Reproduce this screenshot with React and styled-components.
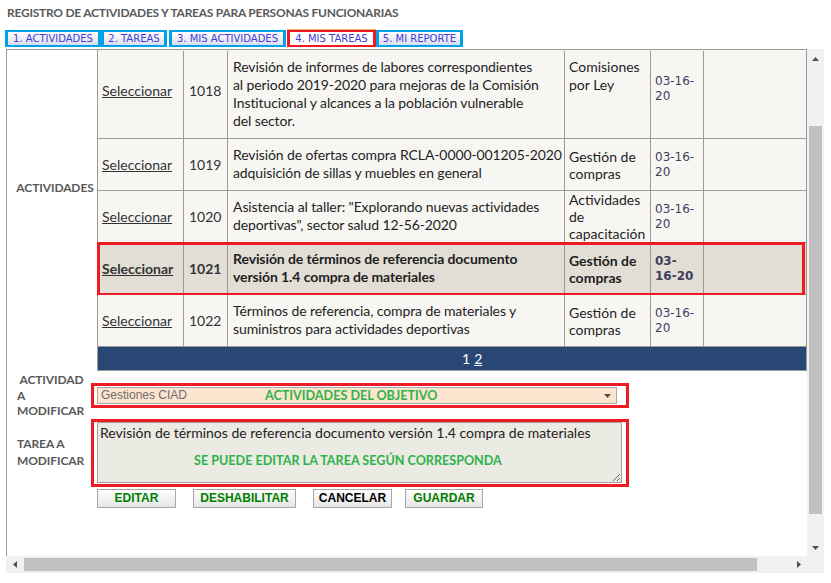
import React from 'react';
import styled, { createGlobalStyle, css } from 'styled-components';

const GlobalStyle = createGlobalStyle`
  html, body { margin: 0; padding: 0; background: #fff; }
  body { font-family: Lato, "Liberation Sans", sans-serif; }
  * { box-sizing: border-box; }
`;

const Page = styled.div`
  width: 831px;
  height: 583px;
  overflow: hidden;
  padding-top: 5px;
`;

const Title = styled.h1`
  margin: 0 0 0 7px;
  font: 700 12px/15px Lato, "Liberation Sans", sans-serif;
  letter-spacing: -0.25px;
  color: #595959;
`;

const Tabs = styled.nav`
  display: flex;
  margin: 10px 0 0 5px;
  height: 17px;
`;

const Tab = styled.a`
  display: flex;
  align-items: center;
  justify-content: center;
  width: ${p => p.$w}px;
  margin-left: ${p => p.$ml || 0}px;
  border: 3px solid ${p => (p.$active ? '#ed1c24' : '#00a2e8')};
  border-top-width: 2px;
  border-bottom-width: 2px;
  background: ${p => (p.$active ? '#ffffff' : 'linear-gradient(#ffffff, #dcdcee)')};
  box-shadow: ${p => (p.$active ? '0 -1px 0 #f0b070' : 'none')};
  font: 10px/13px "DejaVu Sans", Verdana, sans-serif;
  color: #3c3cd8;
  white-space: nowrap;
  text-decoration: none;
`;

const Panel = styled.section`
  display: grid;
  grid-template-columns: 801px 17px;
  grid-template-rows: 507px 17px;
  margin: 2px 0 0 6px;
  width: 818px;
`;

const Viewport = styled.div`
  border-top: 1px solid #9a9a9a;
  border-left: 1px solid #9a9a9a;
  overflow: hidden;
`;

const TableSection = styled.div`
  display: flex;
  align-items: flex-start;
`;

const SideLabel = styled.div`
  width: 90px;
  padding: 130px 0 0 6px;
  text-align: center;
  font: 700 12px/15px Lato, sans-serif;
  letter-spacing: -0.1px;
  color: #595959;
`;

const Grid = styled.div`
  width: 710px;
  border-left: 1px solid #999;
  border-right: 1px solid #999;
  background: #f7f6f3;
`;

const Row = styled.div`
  display: grid;
  grid-template-columns: 86px 44px 337px 86px 53px 102px;
  border-bottom: 1px solid #999;
  background: ${p => (p.$sel ? '#e2ded6' : '#f7f6f3')};
  font-weight: ${p => (p.$sel ? 700 : 400)};
  color: #1e1e1e;
  position: relative;
  &:first-child { padding-top: 1px; }
  ${p => p.$sel && css`
    &::after {
      content: '';
      position: absolute;
      left: -1px;
      right: 1px;
      top: -1px;
      bottom: -2px;
      border: 3px solid #ed1c24;
      pointer-events: none;
    }
  `}
`;

const CellBase = styled.div`
  display: flex;
  flex-direction: column;
  justify-content: ${p => (p.$top ? 'flex-start' : 'center')};
  border-right: 1px solid #999;
  padding-top: ${p => p.$pt || 0}px;
  padding-bottom: ${p => p.$pb || 0}px;
  font-family: Lato, sans-serif;
  font-size: 14px;
  white-space: nowrap;
`;

const LinkCell = styled(CellBase)`
  padding-left: 4px;
  line-height: 18px;
  a { color: #333; text-decoration: underline; }
`;

const IdCell = styled(CellBase)`
  padding-left: 5px;
  line-height: 18px;
  color: #333;
`;

const DescCell = styled(CellBase)`
  padding: 7px 6px 8px 5px;
  line-height: 18px;
  letter-spacing: -0.1px;
`;

const CatCell = styled(CellBase)`
  padding-left: 4px;
  padding-right: 4px;
  line-height: ${p => (p.$lh || 17)}px;
`;

const DateCell = styled(CellBase)`
  padding-left: 4px;
  font-family: "DejaVu Sans", Verdana, sans-serif;
  font-size: 12px;
  line-height: 14.5px;
  color: #3d3d5c;
`;

const EmptyCell = styled(CellBase)`
  border-right: 0;
`;

const Pager = styled.div`
  height: 24px;
  background: #284775;
  border-bottom: 1px solid #999;
  padding-left: 364px;
  font: 14px/23px Lato, sans-serif;
  color: #fff;
  span + a { margin-left: 4px; }
  a { color: #fff; text-decoration: underline; }
`;

const Form = styled.div`
  margin-top: 1.25px;
  display: grid;
  grid-template-columns: 84px 538px;
  align-items: center;
`;

const FieldLabel = styled.div`
  padding-left: 10px;
  font: 700 12px/${p => p.$lh}px Lato, sans-serif;
  letter-spacing: -0.1px;
  color: #595959;
`;

const AnnotBox = styled.div`
  position: relative;
  border: 3px solid #ed1c24;
  padding: ${p => p.$pad};
`;

const SelectBox = styled.div`
  display: flex;
  align-items: center;
  width: 520px;
  height: 17px;
  border: 1px solid #a9a9a9;
  background: #fee5cf;
  padding: 0 5px 0 3px;
  font: 12px/15px "Liberation Sans", Arial, sans-serif;
  color: #6d6d6d;
  svg { margin-left: auto; }
`;

const GreenNote = styled.div`
  position: absolute;
  left: ${p => p.$x}px;
  top: ${p => p.$y}px;
  font: 700 12.6px/15px Lato, sans-serif;
  color: #2eb24b;
  white-space: nowrap;
  pointer-events: none;
`;

const TextArea = styled.textarea`
  display: block;
  width: 525px;
  height: 61px;
  margin: 0;
  border: 1px solid #a0a0a0;
  background: #ebeae3;
  padding: 1px 2px;
  font: 14px/18px Lato, sans-serif;
  color: #1e1e1e;
  outline: none;
`;

const Buttons = styled.div`
  grid-column: 2;
  display: flex;
  margin: 2px 0 0 6px;
`;

const Button = styled.button`
  width: ${p => p.$w}px;
  margin-left: ${p => p.$ml || 0}px;
  height: 19px;
  padding: 0;
  border: 1px solid #a6a6a6;
  border-radius: 0;
  background: linear-gradient(#fefefe, #e6e6e6);
  font: 700 12px/17px "Liberation Sans", Arial, sans-serif;
  color: ${p => p.$color || '#008000'};
`;

const VScroll = styled.div`
  grid-row: 1;
  grid-column: 2;
  display: flex;
  flex-direction: column;
  background: #f1f1f1;
`;

const ArrowBtn = styled.div`
  flex: none;
  width: 17px;
  height: 17px;
  display: flex;
  align-items: center;
  justify-content: center;
  padding-top: ${p => p.$pt || 0}px;
`;

const VTrack = styled.div`
  flex: 1;
  padding: 60px 2px 0;
`;

const VThumb = styled.div`
  height: 388px;
  background: #c1c1c1;
`;

const HScroll = styled.div`
  grid-row: 2;
  grid-column: 1;
  display: flex;
  background: #f1f1f1;
`;

const HTrack = styled.div`
  flex: 1;
  padding: 2px 33px 2px 1px;
`;

const HThumb = styled.div`
  height: 13px;
  background: #c1c1c1;
`;

const Corner = styled.div`
  grid-row: 2;
  grid-column: 2;
  background: #f1f1f1;
`;

const Tri = ({ dir }) => {
  const pts = {
    up: '0,4 3.5,0 7,4',
    down: '0,0 7,0 3.5,4',
    left: '4,0 4,7 0,3.5',
    right: '0,0 0,7 4,3.5',
  }[dir];
  const vertical = dir === 'up' || dir === 'down';
  return (
    <svg width={vertical ? 7 : 4} height={vertical ? 4 : 7} viewBox={vertical ? '0 0 7 4' : '0 0 4 7'}>
      <polygon points={pts} fill="#505050" />
    </svg>
  );
};

const rows = [
  {
    id: '1018',
    desc: ['Revisión de informes de labores correspondientes', 'al periodo 2019-2020 para mejoras de la Comisión', 'Institucional y alcances a la población vulnerable', 'del sector.'],
    cat: ['Comisiones', 'por Ley'],
    date: ['03-16-', '20'],
    first: true,
  },
  {
    id: '1019',
    desc: ['Revisión de ofertas compra RCLA-0000-001205-2020', 'adquisición de sillas y muebles en general'],
    cat: ['Gestión de', 'compras'],
    date: ['03-16-', '20'],
  },
  {
    id: '1020',
    desc: ['Asistencia al taller: "Explorando nuevas actividades', 'deportivas", sector salud 12-56-2020'],
    cat: ['Actividades', 'de', 'capacitación'],
    date: ['03-16-', '20'],
  },
  {
    id: '1021',
    desc: ['Revisión de términos de referencia documento', 'versión 1.4 compra de materiales'],
    cat: ['Gestión de', 'compras'],
    date: ['03-', '16-20'],
    sel: true,
  },
  {
    id: '1022',
    desc: ['Términos de referencia, compra de materiales y', 'suministros para actividades deportivas'],
    cat: ['Gestión de', 'compras'],
    date: ['03-16-', '20'],
  },
];

const Lines = ({ items }) => items.map((t, i) => <span key={i}>{t}</span>);

const tabs = [
  { label: '1. ACTIVIDADES', w: 96 },
  { label: '2. TAREAS', w: 66 },
  { label: '3. MIS ACTIVIDADES', w: 117, ml: 2 },
  { label: '4. MIS TAREAS', w: 89, ml: 1, active: true },
  { label: '5. MI REPORTE', w: 87 },
];

const buttons = [
  { label: 'EDITAR', w: 79 },
  { label: 'DESHABILITAR', w: 103, ml: 17 },
  { label: 'CANCELAR', w: 79, ml: 17, color: '#000' },
  { label: 'GUARDAR', w: 78, ml: 13 },
];

export default function App() {
  return (
    <Page>
      <GlobalStyle />
      <Title>REGISTRO DE ACTIVIDADES Y TAREAS PARA PERSONAS FUNCIONARIAS</Title>
      <Tabs>
        {tabs.map(t => (
          <Tab key={t.label} href="#" $w={t.w} $ml={t.ml} $active={t.active}>{t.label}</Tab>
        ))}
      </Tabs>
      <Panel>
        <Viewport>
          <TableSection>
            <SideLabel>ACTIVIDADES</SideLabel>
            <Grid>
              {rows.map(r => (
                <Row key={r.id} $sel={r.sel}>
                  <LinkCell $pb={r.first ? 7 : 0}><a href="#">Seleccionar</a></LinkCell>
                  <IdCell $pb={r.first ? 7 : 0}>{r.id}</IdCell>
                  <DescCell><Lines items={r.desc} /></DescCell>
                  <CatCell $top={r.first} $pt={r.first ? 7 : 0} $lh={r.first ? 18 : 17}><Lines items={r.cat} /></CatCell>
                  <DateCell $top={r.first} $pt={r.first ? 23 : 0}><Lines items={r.date} /></DateCell>
                  <EmptyCell />
                </Row>
              ))}
              <Pager><span>1</span><a href="#">2</a></Pager>
            </Grid>
          </TableSection>
          <Form>
            <FieldLabel $lh={15.5}>{'\u00a0ACTIVIDAD'}<br />A<br />MODIFICAR</FieldLabel>
            <AnnotBox $pad="1px 9px 1px 3px">
              <SelectBox>
                Gestiones CIAD
                <Tri dir="down" />
              </SelectBox>
              <GreenNote $x={171} $y={2}>ACTIVIDADES DEL OBJETIVO</GreenNote>
            </AnnotBox>
            <FieldLabel $lh={16.5}>TAREA A<br />MODIFICAR</FieldLabel>
            <AnnotBox $pad="0 4px 1px 3px">
              <TextArea readOnly defaultValue="Revisión de términos de referencia documento versión 1.4 compra de materiales" />
              <GreenNote $x={100} $y={31}>SE PUEDE EDITAR LA TAREA SEGÚN CORRESPONDA</GreenNote>
            </AnnotBox>
            <Buttons>
              {buttons.map(b => (
                <Button key={b.label} $w={b.w} $ml={b.ml} $color={b.color}>{b.label}</Button>
              ))}
            </Buttons>
          </Form>
        </Viewport>
        <VScroll>
          <ArrowBtn $pt={2}><Tri dir="up" /></ArrowBtn>
          <VTrack><VThumb /></VTrack>
          <ArrowBtn><Tri dir="down" /></ArrowBtn>
        </VScroll>
        <HScroll>
          <ArrowBtn><Tri dir="left" /></ArrowBtn>
          <HTrack><HThumb /></HTrack>
          <ArrowBtn><Tri dir="right" /></ArrowBtn>
        </HScroll>
        <Corner />
      </Panel>
    </Page>
  );
}
